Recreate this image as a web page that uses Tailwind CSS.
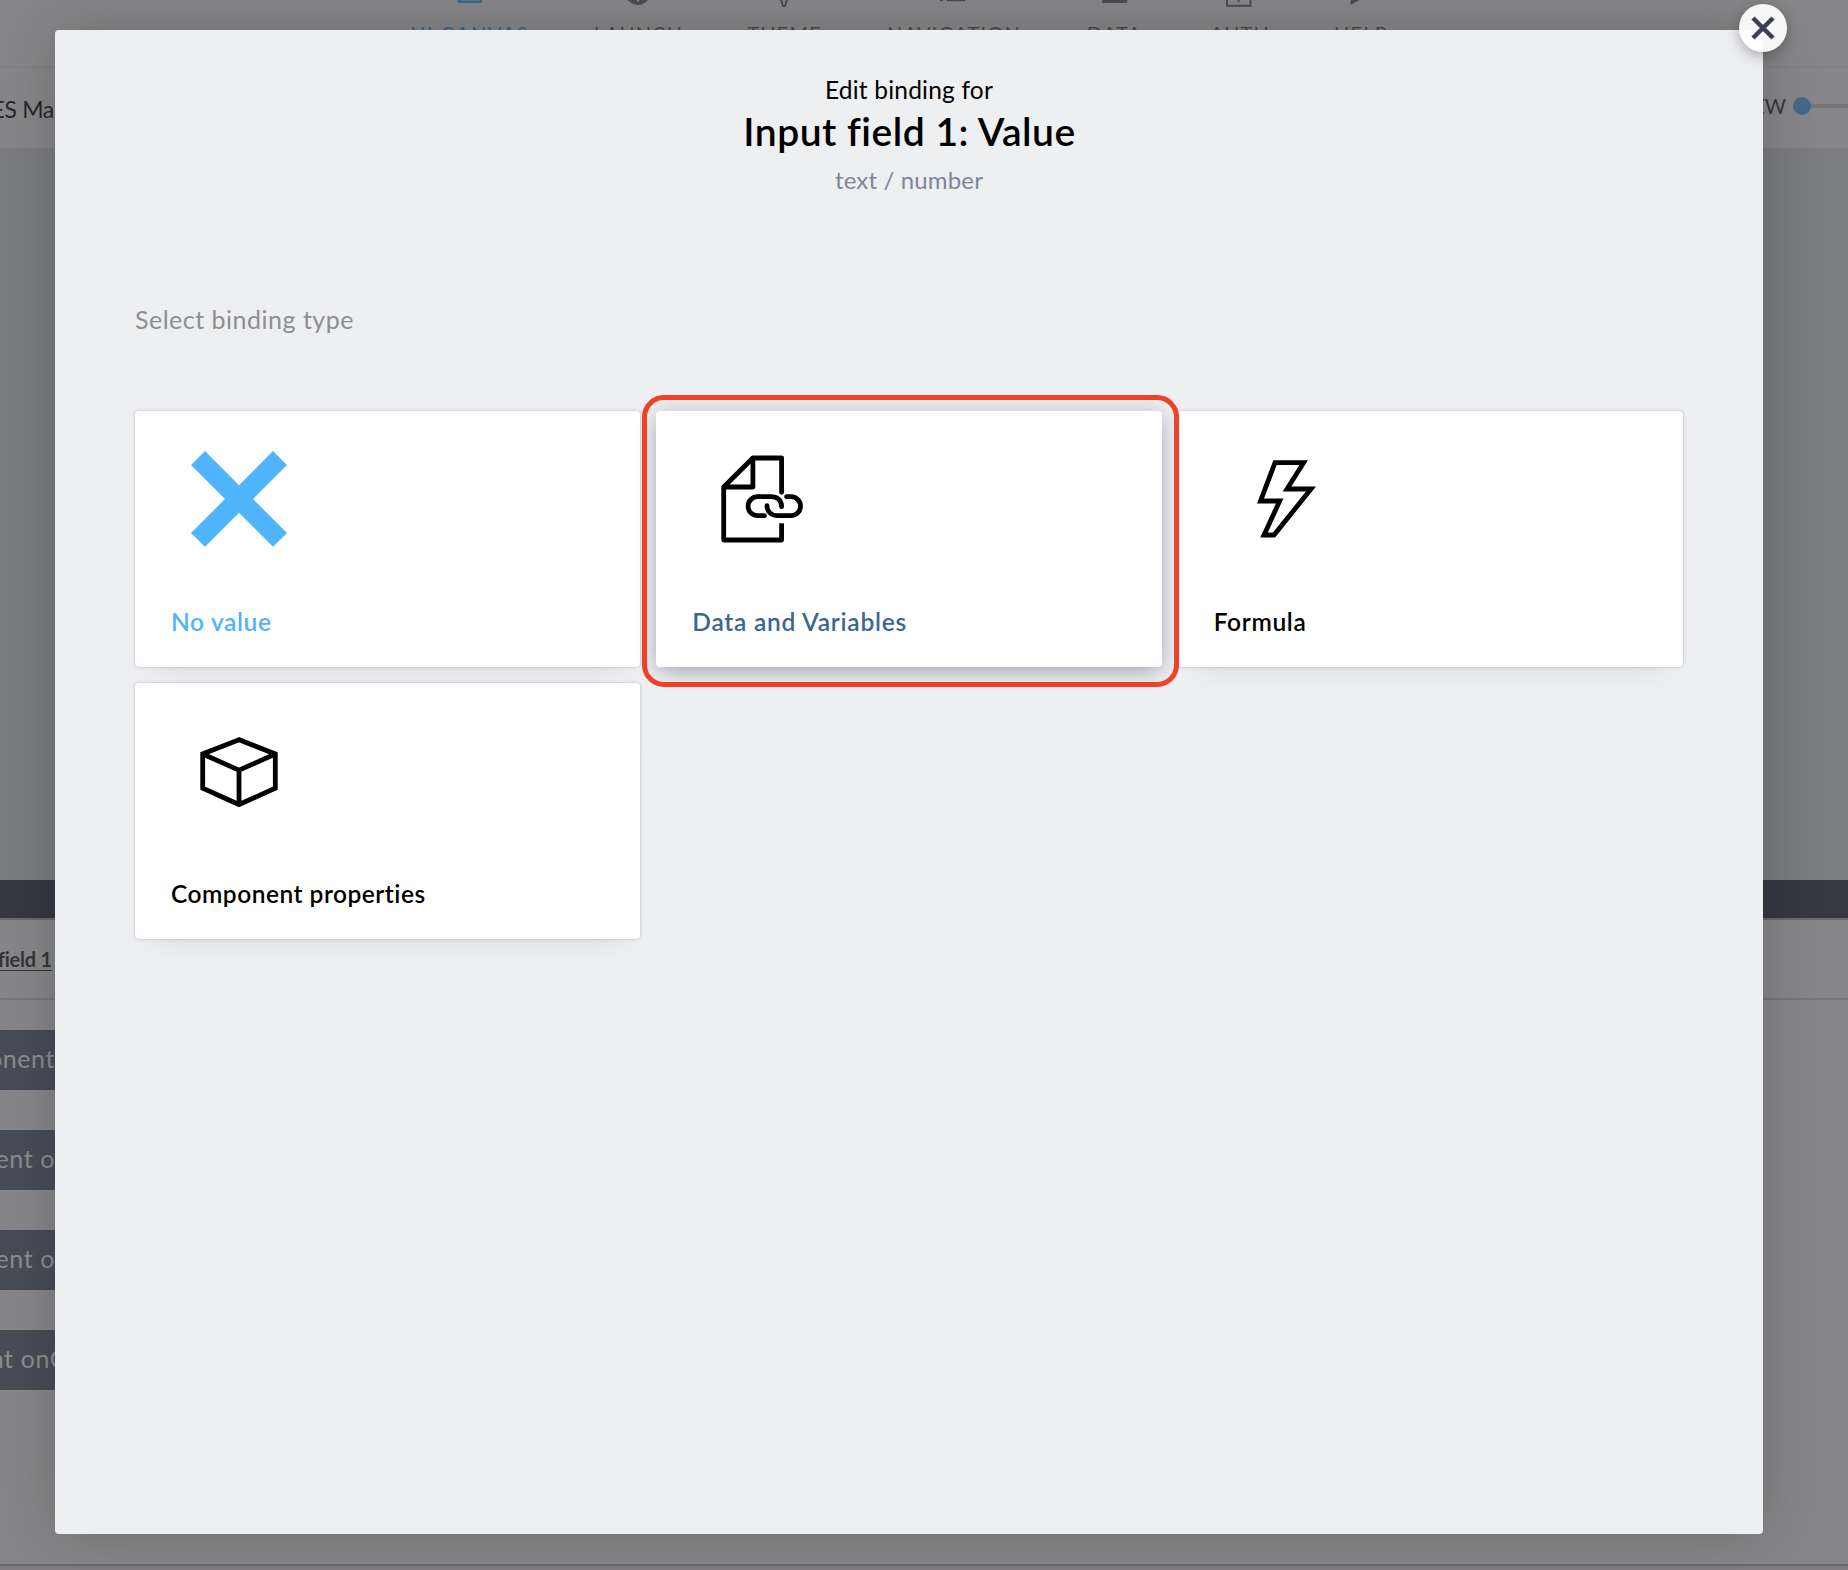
<!DOCTYPE html>
<html lang="en">
<head>
<meta charset="utf-8">
<title>Edit binding</title>
<script src="https://cdn.jsdelivr.net/npm/@tailwindcss/browser@4"></script>
</head>
<body class="h-[1570px] w-[1848px] overflow-hidden bg-[#878789] font-['Lato',sans-serif] text-black">

<!-- Builder page behind the dialog -->
<div class="flex h-[1570px] flex-col overflow-hidden">
  <nav class="flex h-[68px] shrink-0 border-b-2 border-[#828284] pl-[411px] text-[20px] leading-6 tracking-[1.2px] text-[#4c4c4f]">
    <div class="mr-[66px] flex w-[118px] flex-col items-center text-[#38668b]">
      <svg class="h-[22px] w-8 shrink-0" viewBox="0 0 32 22" fill="none" stroke="currentColor" stroke-width="2.400"><path d="M5.200-8V1.800H26.800V-8"/></svg>
      <span class="-mt-px whitespace-nowrap tracking-[1.6px]">UI CANVAS</span>
    </div>
    <div class="mr-[66px] flex w-[87px] flex-col items-center">
      <svg class="h-[22px] w-8 shrink-0" viewBox="0 0 32 22"><circle cx="15" cy="-7.500" r="12.500" fill="currentColor"/><circle cx="15" cy="0" r="1.500" fill="#878789"/></svg>
      <span class="-mt-px">LAUNCH</span>
    </div>
    <div class="mr-[66px] flex w-[73px] flex-col items-center">
      <svg class="h-[22px] w-8 shrink-0" viewBox="0 0 32 22" fill="none" stroke="currentColor" stroke-width="2"><path d="M11.500-2L14 6H16L18.500-2"/></svg>
      <span class="-mt-px">THEME</span>
    </div>
    <div class="mr-[66px] flex w-[134px] flex-col items-center">
      <svg class="h-[22px] w-8 shrink-0" viewBox="0 0 32 22" fill="currentColor"><path d="M2 0h3v1H2zM9 0h18v1.300H9z"/></svg>
      <span class="-mt-px">NAVIGATION</span>
    </div>
    <div class="mr-[69px] flex w-[55px] flex-col items-center">
      <svg class="h-[22px] w-8 shrink-0" viewBox="0 0 32 22" fill="currentColor"><path d="M3.500 0H28.500L28 3H3z"/></svg>
      <span class="-mt-px">DATA</span>
    </div>
    <div class="mr-[65px] flex w-[58px] flex-col items-center">
      <svg class="h-[22px] w-8 shrink-0" viewBox="0 0 32 22" fill="none" stroke="currentColor" stroke-width="2"><path d="M3-8V5.700H26.500V-8M14.700-4V2"/></svg>
      <span class="-mt-px">AUTH</span>
    </div>
    <div class="flex w-[54px] flex-col items-center">
      <svg class="h-[22px] w-8 shrink-0" viewBox="0 0 32 22" fill="currentColor"><path d="M5.500-2V5L14.500 0V-2z"/></svg>
      <span class="-mt-px">HELP</span>
    </div>
  </nav>

  <div class="flex h-20 shrink-0 items-start justify-between pt-6">
    <div class="flex w-[54px] justify-end pt-px text-[23px] leading-8 tracking-[-0.3px] whitespace-nowrap text-[#27272a]">TES Ma</div>
    <div class="flex h-7 items-center">
      <span class="text-[20.5px] leading-6 text-[#36373e]">VIEW</span>
      <span class="ml-[7px] size-[18px] rounded-full bg-[#43698a]"></span>
      <span class="h-1 w-[37px] bg-[#77777a]"></span>
    </div>
  </div>

  <div class="h-[732px] shrink-0 bg-[#7b7c80]"></div>
  <div class="h-[38px] shrink-0 bg-[#353841]"></div>

  <div class="flex h-[82px] shrink-0 items-center border-y-2 border-t-[#6b6b6d] border-b-[#767678]">
    <div class="flex w-[52px] justify-end text-[20px] leading-7 font-bold tracking-[-0.2px] whitespace-nowrap text-[#353538] underline decoration-1 underline-offset-[3px]">field 1</div>
  </div>

  <div class="flex w-[55px] flex-col gap-10 pt-[30px] text-[25px] leading-[56px] tracking-[0.6px] whitespace-nowrap text-[#8c8d8e]">
    <div class="flex h-[60px] justify-end bg-[#484c58]">component</div>
    <div class="flex h-[60px] justify-end bg-[#484c58]">component o</div>
    <div class="flex h-[60px] justify-end bg-[#484c58]">component o</div>
    <div class="flex h-[60px] justify-end bg-[#484c58]"><span class="-mr-3">component onC</span></div>
  </div>
  <div class="mt-auto h-1.5 shrink-0 border-t-2 border-[#6a6a6b] bg-[#7f7d7f]"></div>
</div>

<!-- Dialog -->
<main class="absolute top-[30px] left-[55px] h-[1504px] w-[1708px] rounded-[4px] bg-[#eeeff1] px-20 pt-[46px] shadow-[0_0_60px_rgba(0,0,0,0.2)]">
  <header class="flex flex-col items-center">
    <p class="text-[24.5px] leading-7 tracking-[0.2px]">Edit binding for</p>
    <h1 class="mt-[5px] pl-px text-[39px] leading-11 font-semibold tracking-[0.5px]">Input field 1: Value</h1>
    <p class="mt-[13px] text-[24px] leading-7 tracking-[0.15px] text-[#7d869c]">text / number</p>
  </header>

  <h2 class="mt-[111px] text-[25px] leading-7 tracking-[0.5px] text-[#8d8e91]">Select binding type</h2>

  <div class="mt-[78px] grid grid-cols-3 gap-4 text-[24.5px] leading-7 font-semibold">
    <section class="flex h-64 flex-col rounded-[4px] bg-white pt-9 pl-9 shadow-[0_0_3px_rgba(60,70,110,0.35),0_24px_24px_-20px_rgba(0,0,0,0.08)]">
      <svg class="ml-4 size-[104px]" viewBox="0 0 104 104" fill="#4fb4fa"><path d="M4 18L18 4L52 38.300L86 4L100 18L66 52L100 86L86 99.700L52 65.700L18 99.700L4 86L38 52z"/></svg>
      <h3 class="mt-[57px] tracking-[0.65px] text-[#4fb4fa]">No value</h3>
    </section>

    <section class="relative flex h-64 flex-col rounded-[4px] bg-white pt-9 pl-9 shadow-[0_0_20px_rgba(60,70,100,0.2),0_8px_20px_-4px_rgba(60,70,100,0.33)]">
      <svg class="ml-4 size-[104px]" viewBox="0 0 104 104" fill="none" stroke="#000" stroke-width="4.800" stroke-linejoin="round" stroke-linecap="round"><path d="M73.600 45.300V11H44.900L15.700 40V93H73.600M44.900 11V40H15.700"/><path d="M73.600 93V76.300" stroke-linecap="butt"/><path d="M56.500 68.700H49.600A9.500 9.500 0 0 1 49.600 49.700H62.800C69.300 49.700 73.600 53.500 73.600 59.700M78.600 49.700H83A9.500 9.500 0 0 1 83 68.700H69.800C63.300 68.700 59 64.500 59 58.700"/></svg>
      <h3 class="mt-[57px] tracking-[0.75px] text-[#3a6694]">Data and Variables</h3>
      <!-- highlight ring around the chosen card -->
      <div class="absolute -top-4 -right-[17px] -bottom-5 -left-[14px] z-10 rounded-[22px] border-5 border-[#ee4126]"></div>
    </section>

    <section class="flex h-64 flex-col rounded-[4px] bg-white pt-9 pl-9 shadow-[0_0_3px_rgba(60,70,110,0.35),0_24px_24px_-20px_rgba(0,0,0,0.08)]">
      <svg class="ml-4 size-[104px]" viewBox="0 0 104 104" fill="none" stroke="#000" stroke-width="4.800"><path d="M45 15.700H73.600L57 42H81L44 88H34L49.700 54H30.500z"/></svg>
      <h3 class="mt-[57px] tracking-[0.65px]">Formula</h3>
    </section>

    <section class="flex h-64 flex-col rounded-[4px] bg-white pt-9 pl-9 shadow-[0_0_3px_rgba(60,70,110,0.35),0_24px_24px_-20px_rgba(0,0,0,0.08)]">
      <svg class="ml-4 size-[104px]" viewBox="0 0 104 104" fill="none" stroke="#000" stroke-width="4.800" stroke-linejoin="miter"><path d="M52 20.700L15.700 35V69.200L52 85.500L88.300 69.200V35zM15.700 35L52 51.200L88.300 35M52 51.200V85.500"/></svg>
      <h3 class="mt-[57px] tracking-[0.5px]">Component properties</h3>
    </section>
  </div>

  <button class="absolute -top-[26px] -right-6 flex size-12 items-center justify-center rounded-full bg-white/93 shadow-[0_4px_14px_rgba(0,0,0,0.3)]" aria-label="Close">
    <svg class="size-6" viewBox="0 0 24 24" stroke="#3a3f54" stroke-width="4.500"><path d="M2 2L22 22M22 2L2 22"/></svg>
  </button>
</main>
</body>
</html>
